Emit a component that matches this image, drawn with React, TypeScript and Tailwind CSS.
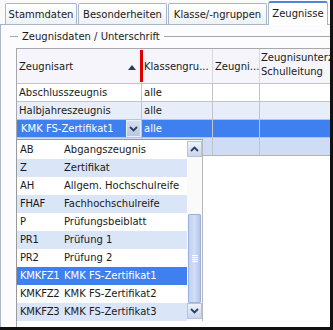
import React from "react";

const F = "font-['DejaVu_Sans',sans-serif]";

function ChevronDown({ className = "" }: { className?: string }) {
  return (
    <svg width="9" height="6" viewBox="0 0 9 6" className={className}>
      <path d="M1 1 L4.5 4.5 L8 1" fill="none" stroke="#2a3f66" strokeWidth="1.8" />
    </svg>
  );
}
function ChevronUp({ className = "" }: { className?: string }) {
  return (
    <svg width="9" height="6" viewBox="0 0 9 6" className={className}>
      <path d="M1 5 L4.5 1.5 L8 5" fill="none" stroke="#2a3f66" strokeWidth="1.8" />
    </svg>
  );
}

const tabs = [
  { label: "Stammdaten", w: "w-[72px]" },
  { label: "Besonderheiten", w: "w-[89px]" },
  { label: "Klasse/-ngruppen", w: "w-[99px]" },
];

const items: [string, string][] = [
  ["AB", "Abgangszeugnis"],
  ["Z", "Zertifikat"],
  ["AH", "Allgem. Hochschulreife"],
  ["FHAF", "Fachhochschulreife"],
  ["P", "Prüfungsbeiblatt"],
  ["PR1", "Prüfung 1"],
  ["PR2", "Prüfung 2"],
  ["KMKFZ1", "KMK FS-Zertifikat1"],
  ["KMKFZ2", "KMK FS-Zertifikat2"],
  ["KMKFZ3", "KMK FS-Zertifikat3"],
];

export default function App() {
  return (
    <div className={`${F} relative w-[333px] h-[330px] overflow-hidden bg-[#111] text-[10px] text-[#1a1a1a]`}>
      <div className="w-[330px] h-[327px] bg-[#fafafc] flex flex-col">
        {/* Tab bar */}
        <div className="h-[24px] flex items-end pl-[5px] gap-[1px] shrink-0">
          {tabs.map((t) => (
            <div
              key={t.label}
              className={`${t.w} h-[21px] border border-b-0 border-[#a9b6c9] rounded-t-[2px] bg-gradient-to-b from-white to-[#eef1f5] flex items-center justify-center pt-[1px] leading-none`}
            >
              {t.label}
            </div>
          ))}
          <div className="w-[60px] h-[24px] border border-b-0 border-[#a9b6c9] border-t-2 border-t-[#4f86d6] rounded-t-[3px] bg-white flex items-center justify-center leading-none -mb-[1px] relative z-10">
            Zeugnisse
          </div>
        </div>
        {/* Panel */}
        <div className="flex-1 border-t border-l border-[#a9b6c9] bg-[#fcfcfe] flex flex-col relative">
          {/* group title */}
          <div className="h-[23px] flex items-center shrink-0">
            <div className="w-[8px] h-px bg-[#a8a8a8] ml-[9px]" />
            <span className="px-[4px] leading-none">Zeugnisdaten / Unterschrift</span>
            <div className="flex-1 h-px bg-[#a8a8a8]" />
          </div>
          {/* Grid */}
          <div className="ml-[15px] border-l border-t border-[#a8a8a8] bg-white flex-1 flex flex-col">
            {/* header */}
            <div className="h-[35px] flex bg-[#f5f5fb] border-b border-[#c4c4c4] shrink-0">
              <div className="w-[124px] relative flex items-center pl-[2px]">
                <span>Zeugnisart</span>
                <svg width="8" height="5" viewBox="0 0 8 5" className="absolute left-[111px] top-[16px]">
                  <path d="M0 5 L4 0 L8 5 Z" fill="#2d3d52" />
                </svg>
                <div className="absolute right-[-2px] top-[1px] w-[3px] h-[32px] bg-[#e10000]" />
              </div>
              <div className="w-[71px] border-l border-[#d8d8d8] flex items-center pl-[2px]">Klassengru...</div>
              <div className="w-[47px] border-l border-[#d8d8d8] flex items-center pl-[2px]">Zeugni...</div>
              <div className="flex-1 min-w-0 border-l border-[#d8d8d8] pl-[1px] pt-[2px] leading-[14px] whitespace-nowrap overflow-hidden">
                Zeugnisunterz
                <br />
                Schulleitung
              </div>
            </div>
            {[
              { a: "Abschlusszeugnis", k: "alle", bg: "bg-white" },
              { a: "Halbjahreszeugnis", k: "alle", bg: "bg-[#e8eef9]" },
            ].map((r) => (
              <div key={r.a} className={`h-[18px] flex ${r.bg} border-b border-[#c4c4c4] shrink-0`}>
                <div className="w-[124px] flex items-center pl-[2px] leading-none">{r.a}</div>
                <div className="w-[71px] border-l border-[#c4c4c4] flex items-center pl-[2px] leading-none">{r.k}</div>
                <div className="w-[47px] border-l border-[#c4c4c4]" />
                <div className="flex-1 border-l border-[#c4c4c4]" />
              </div>
            ))}
            {/* selected row */}
            <div className="h-[18px] flex bg-[#3e80f0] border-b border-[#c4c4c4] shrink-0 text-white">
              <div className="w-[124px] flex items-center pl-[4px] leading-none relative">
                KMK FS-Zertifikat1
                <div className="absolute left-[109px] top-[0px] w-[15px] h-[17px] border border-[#e8eef8] bg-gradient-to-b from-[#d6dff0] to-[#b9c7e4] flex items-center justify-center">
                  <ChevronDown />
                </div>
              </div>
              <div className="w-[71px] border-l border-[#c4c4c4] flex items-center pl-[2px] leading-none">alle</div>
              <div className="w-[47px] border-l border-[#c4c4c4]" />
              <div className="flex-1 border-l border-[#c4c4c4]" />
            </div>
            <div className="h-[18px] flex bg-[#cedcf6] border-b border-[#b4b4b4] shrink-0">
              <div className="w-[124px]" />
              <div className="w-[71px] border-l border-[#c4c4c4]" />
              <div className="w-[47px] border-l border-[#c4c4c4]" />
              <div className="flex-1 border-l border-[#c4c4c4]" />
            </div>
            <div className="flex-1 bg-white" />
          </div>
          {/* dropdown list overlay */}
          <div className="absolute left-[15px] top-[114px] w-[187px] h-[182px] border-l border-t border-[#9a9a9a] bg-white flex">
            <div className="w-[170px] flex flex-col pt-[1px]">
              {items.map(([c, n], i) => {
                const sel = c === "KMKFZ1";
                const bg = sel ? "bg-[#3e80f0] text-white" : i % 2 === 1 ? "bg-[#dae5f8]" : "bg-white";
                return (
                  <div key={c} className={`h-[18px] flex items-center leading-none ${bg} shrink-0`}>
                    <span className="w-[47px] shrink-0 pl-[3px] tracking-[-0.2px]">{c}</span>
                    <span className="whitespace-nowrap">{n}</span>
                  </div>
                );
              })}
            </div>
            <div className="w-[16px] bg-[#fafafa] border-r border-[#b8b8b8] flex flex-col pt-[1px]">
              <div className="h-[16px] border border-[#b6c3dc] bg-gradient-to-b from-[#eef2fa] to-[#c9d5ee] flex items-center justify-center">
                <ChevronUp />
              </div>
              <div className="h-[57px]" />
              <div className="h-[89px] mx-[1px] border border-[#9db1de] rounded-[1px] bg-gradient-to-r from-[#c2d1f2] via-[#d3def7] to-[#b3c5ee] flex flex-col items-center justify-center gap-[1px]">
                <div className="w-[6px] h-px bg-white" />
                <div className="w-[6px] h-px bg-white" />
                <div className="w-[6px] h-px bg-white" />
                <div className="w-[6px] h-px bg-white" />
              </div>
              <div className="h-[16px] border border-[#b6c3dc] bg-gradient-to-b from-[#eef2fa] to-[#c9d5ee] flex items-center justify-center">
                <ChevronDown />
              </div>
            </div>
          </div>
        </div>
      </div>
    </div>
  );
}
